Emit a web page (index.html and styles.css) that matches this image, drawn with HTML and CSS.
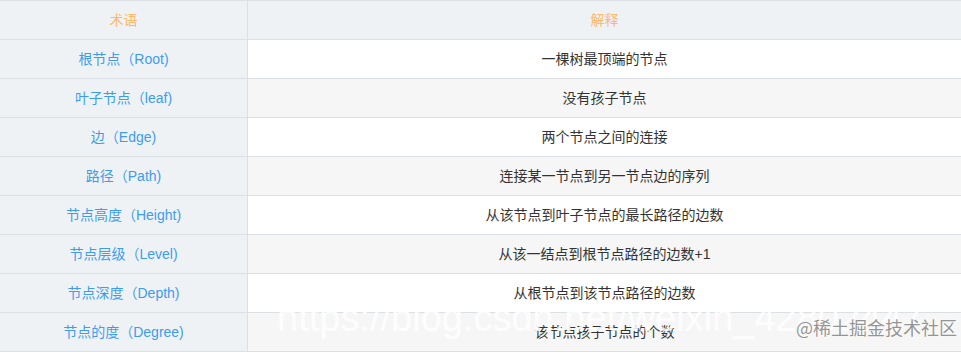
FILE: index.html
```html
<!DOCTYPE html>
<html lang="zh">
<head>
<meta charset="utf-8">
<title>树的术语</title>
<link rel="stylesheet" href="styles.css">
</head>
<body>
<div class="wrap">
<table class="terms">
<thead>
<tr><th class="c1">术语</th><th class="c2">解释</th></tr>
</thead>
<tbody>
<tr><td class="term">根节点（Root)</td><td class="desc">一棵树最顶端的节点</td></tr>
<tr><td class="term">叶子节点（leaf)</td><td class="desc">没有孩子节点</td></tr>
<tr><td class="term">边（Edge)</td><td class="desc">两个节点之间的连接</td></tr>
<tr><td class="term">路径（Path)</td><td class="desc">连接某一节点到另一节点边的序列</td></tr>
<tr><td class="term">节点高度（Height)</td><td class="desc">从该节点到叶子节点的最长路径的边数</td></tr>
<tr><td class="term">节点层级（Level)</td><td class="desc">从该一结点到根节点路径的边数+1</td></tr>
<tr><td class="term">节点深度（Depth)</td><td class="desc">从根节点到该节点路径的边数</td></tr>
<tr><td class="term">节点的度（Degree)</td><td class="desc">该节点孩子节点的个数</td></tr>
</tbody>
</table>
<div class="wm-url">https://blog.csdn.net/weixin_42802447</div>
<div class="wm-brand">@稀土掘金技术社区</div>
</div>
</body>
</html>
```
FILE: styles.css
```css
html, body {
  margin: 0;
  padding: 0;
  background: #ffffff;
}
body {
  font-family: "Liberation Sans", "Noto Sans CJK SC", sans-serif;
  font-size: 14px;
  width: 961px;
  height: 352px;
  overflow: hidden;
}
.wrap {
  position: relative;
  width: 963px;
}
.terms {
  border-collapse: collapse;
  width: 963px;
  margin-left: -1px;
  table-layout: fixed;
}
.terms th, .terms td {
  border: 1px solid #dcdfe3;
  height: 38px;
  padding: 0;
  text-align: center;
  vertical-align: middle;
  line-height: 20px;
}
.terms th {
  background: #eff2f5;
  color: #ffb86a;
  font-weight: normal;
}
.c1 { width: 247px; }
.term {
  background: #eff2f5;
  color: #3d9cf0;
}
.desc {
  color: #333333;
  background: #ffffff;
}
tbody tr:nth-child(even) .desc {
  background: #f6f6f6;
}
.wm-url {
  position: absolute;
  left: 277px;
  top: 296px;
  font-family: "Liberation Sans", sans-serif;
  font-size: 38px;
  line-height: 44px;
  color: rgba(255, 255, 255, 0.9);
  white-space: nowrap;
}
.wm-brand {
  position: absolute;
  left: 796px;
  top: 316px;
  font-family: "Noto Sans CJK SC", sans-serif;
  font-size: 18px;
  line-height: 22px;
  color: rgba(130, 130, 130, 0.85);
  text-shadow: 0 0 2px #ffffff;
  white-space: nowrap;
}
```
